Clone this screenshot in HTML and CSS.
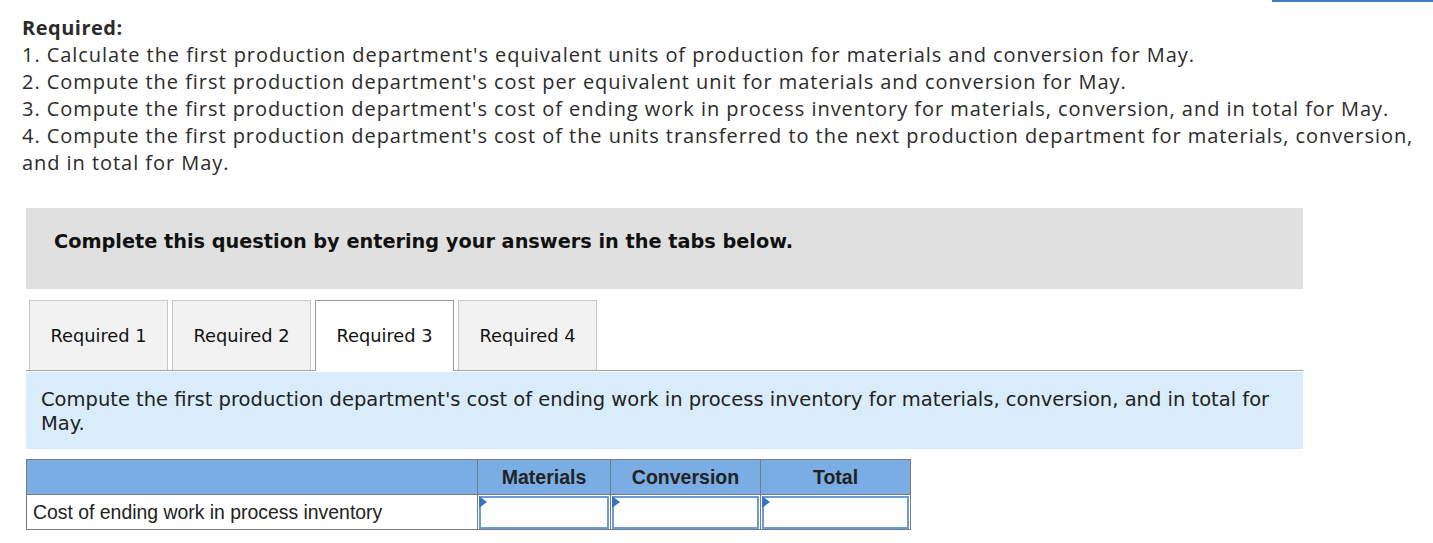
FILE: index.html
```html
<!DOCTYPE html>
<html>
<head>
<meta charset="utf-8">
<link rel="stylesheet" href="styles.css">
</head>
<body>
<div class="topbar"><div class="topbar-line"></div></div>
<div class="required">
  <div class="req-title">Required:</div>
  <div>1. Calculate the first production department's equivalent units of production for materials and conversion for May.</div>
  <div>2. Compute the first production department's cost per equivalent unit for materials and conversion for May.</div>
  <div>3. Compute the first production department's cost of ending work in process inventory for materials, conversion, and in total for May.</div>
  <div>4. Compute the first production department's cost of the units transferred to the next production department for materials, conversion, and in total for May.</div>
</div>
<div class="question">
  <div class="instr">Complete this question by entering your answers in the tabs below.</div>
  <div class="tabs">
    <div class="tab">Required 1</div>
    <div class="tab">Required 2</div>
    <div class="tab active">Required 3</div>
    <div class="tab">Required 4</div>
  </div>
  <div class="prompt">Compute the first production department's cost of ending work in process inventory for materials, conversion, and in total for May.</div>
  <table class="grid">
    <tr class="head">
      <th class="c-label"></th>
      <th class="c-mat">Materials</th>
      <th class="c-conv">Conversion</th>
      <th class="c-tot">Total</th>
    </tr>
    <tr class="row">
      <td class="label">Cost of ending work in process inventory</td>
      <td class="cell"><div class="input"></div></td>
      <td class="cell"><div class="input"></div></td>
      <td class="cell"><div class="input"></div></td>
    </tr>
  </table>
</div>
</body>
</html>
```

FILE: styles.css
```css
html, body {
  margin: 0;
  padding: 0;
  background: #ffffff;
}
.topbar {
  display: flex;
  justify-content: flex-end;
  height: 2px;
}
.topbar-line {
  width: 161px;
  height: 2px;
  background: #3f7fc8;
}
.required {
  padding: 12px 0 0 22px;
  font-family: "Open Sans", "Lato", sans-serif;
  font-size: 20px;
  line-height: 27px;
  letter-spacing: 0.95px;
  color: #2b2b2b;
  width: 1428px;
  box-sizing: border-box;
}
.req-title {
  font-weight: bold;
  letter-spacing: 0.5px;
}
.question {
  margin: 32px 0 0 26px;
  width: 1277px;
}
.instr {
  background: #e0e0e0;
  height: 81px;
  box-sizing: border-box;
  padding: 22px 0 0 28px;
  font-family: "DejaVu Sans", Verdana, sans-serif;
  font-weight: bold;
  font-size: 19.3px;
  line-height: 23px;
  color: #111;
}
.tabs {
  display: flex;
  gap: 4px;
  margin-top: 11px;
  padding-left: 3px;
  border-bottom: 1px solid #a0a0a0;
  height: 70px;
}
.tab {
  width: 139px;
  height: 70px;
  box-sizing: border-box;
  border: 1px solid #c8c8c8;
  border-bottom: none;
  background: #f2f2f2;
  display: flex;
  align-items: center;
  justify-content: center;
  font-family: "DejaVu Sans", Verdana, sans-serif;
  font-size: 17.8px;
  color: #111;
}
.tab.active {
  background: #ffffff;
  border-color: #9a9a9a;
  height: 71px;
  padding-bottom: 1px;
  position: relative;
  z-index: 1;
}
.prompt {
  margin-top: 1px;
  background: #d9ecfa;
  height: 77px;
  box-sizing: border-box;
  padding: 16px 20px 0 15px;
  font-family: "DejaVu Sans", Verdana, sans-serif;
  font-size: 19.5px;
  line-height: 24px;
  color: #222;
}
.grid {
  margin-top: 10px;
  border-collapse: collapse;
  font-family: "Liberation Sans", Arial, sans-serif;
  color: #222;
}
.grid th, .grid td {
  border: 1px solid #7a7a7a;
  padding: 0;
}
.head th {
  background: #7aade4;
  height: 34px;
  font-size: 19.5px;
  font-weight: bold;
  text-align: center;
}
.c-label { width: 450px; }
.c-mat { width: 132px; }
.c-conv { width: 149px; }
.c-tot { width: 149px; }
.row td { height: 34px; }
.label {
  font-size: 19.4px;
  padding-left: 6px !important;
  text-align: left;
}
.cell {
  vertical-align: top;
}
.input {
  position: relative;
  height: 29px;
  margin: 1px 1px 0 1px;
  border: 2px solid #6a9ad8;
  background: #fff;
}
.input::before {
  content: "";
  position: absolute;
  left: -2px;
  top: -2px;
  width: 0;
  height: 0;
  border-top: 6px solid transparent;
  border-bottom: 6px solid transparent;
  border-left: 8px solid #3a74c0;
}
```
